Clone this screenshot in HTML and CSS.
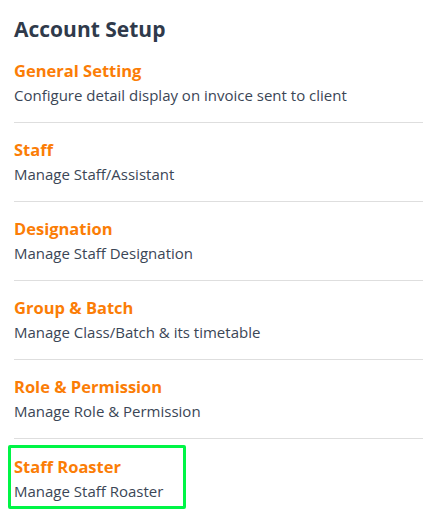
FILE: index.html
```html
<!DOCTYPE html>
<html lang="en">
<head>
<meta charset="utf-8">
<title>Account Setup</title>
<link rel="stylesheet" href="styles.css">
</head>
<body>
<main class="page">
  <h1 class="page-title">Account Setup</h1>
  <ul class="setup-list">
    <li class="setup-item">
      <div class="item-title">General Setting</div>
      <div class="item-desc">Configure detail display on invoice sent to client</div>
    </li>
    <li class="setup-item">
      <div class="item-title">Staff</div>
      <div class="item-desc">Manage Staff/Assistant</div>
    </li>
    <li class="setup-item">
      <div class="item-title">Designation</div>
      <div class="item-desc">Manage Staff Designation</div>
    </li>
    <li class="setup-item">
      <div class="item-title">Group &amp; Batch</div>
      <div class="item-desc">Manage Class/Batch &amp; its timetable</div>
    </li>
    <li class="setup-item">
      <div class="item-title">Role &amp; Permission</div>
      <div class="item-desc">Manage Role &amp; Permission</div>
    </li>
    <li class="setup-item setup-item--last">
      <div class="highlight">
        <div class="item-title">Staff Roaster</div>
        <div class="item-desc">Manage Staff Roaster</div>
      </div>
    </li>
  </ul>
</main>
</body>
</html>
```
FILE: styles.css
```css
html, body {
  margin: 0;
  padding: 0;
  background: #ffffff;
}
body {
  font-family: "Open Sans", "Noto Sans", sans-serif;
}
.page {
  padding: 15px 14px 0;
}
.page-title {
  margin: 0 0 1px;
  font-size: 21px;
  line-height: 28px;
  font-weight: 700;
  color: #2f3a4b;
}
.setup-list {
  list-style: none;
  margin: 0;
  padding: 0;
}
.setup-item {
  padding: 15px 0 16px;
  border-bottom: 1px solid #dedede;
}
.setup-item--last {
  border-bottom: none;
  padding-top: 6px;
}
.setup-item--last .highlight {
  padding-top: 7px;
}
.item-title {
  font-size: 16.5px;
  line-height: 24px;
  font-weight: 700;
  color: #fb7d06;
}
.item-desc {
  margin-top: 1px;
  font-size: 15px;
  line-height: 22px;
  color: #3b4656;
}
.highlight {
  display: inline-block;
  margin-left: -6px;
  padding: 7px 20px 4px 3px;
  border: 3px solid #00f546;
  border-radius: 2px;
}
```
